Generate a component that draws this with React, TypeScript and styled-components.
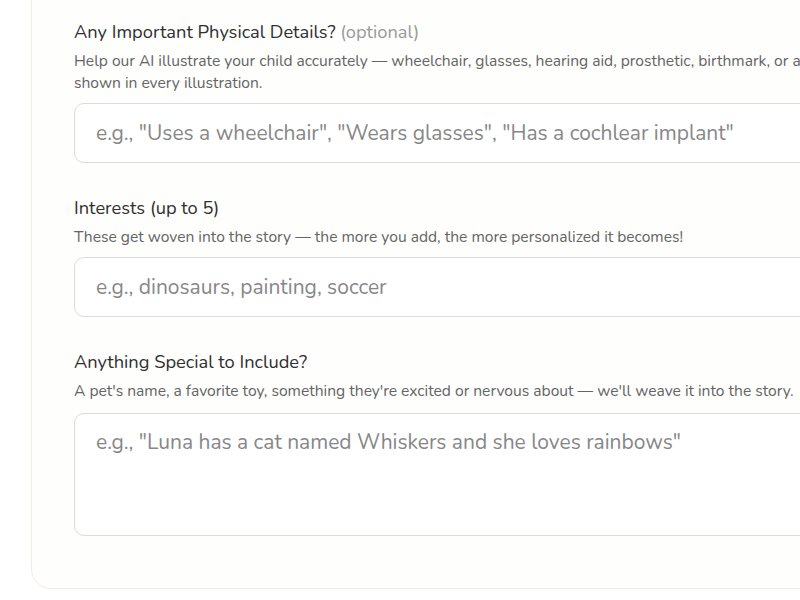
import React from "react";
import styled, { createGlobalStyle } from "styled-components";

const Global = createGlobalStyle`
  html, body {
    margin: 0;
    padding: 0;
    background: #ffffff;
    overflow: hidden;
    font-family: "Nunito", Lato, "Open Sans", sans-serif;
  }
`;

const Card = styled.div`
  margin: -20px 0 0 31px;
  width: 1100px;
  box-sizing: border-box;
  padding: 39px 42px 52px;
  background: #fefefd;
  border: 1.5px solid #f4ebe2;
  border-radius: 20px;
  display: flex;
  flex-direction: column;
  gap: 33px;
`;

const Field = styled.div`
  display: flex;
  flex-direction: column;
`;

const Label = styled.div`
  font-size: 18.3px;
  line-height: 24px;
  color: #2f2f2f;
`;

const Optional = styled.span`
  color: #9a9a9a;
`;

const Help = styled.div`
  margin-top: 6px;
  font-size: 15.6px;
  line-height: 22px;
  color: #646464;
  width: 955px;
`;

const boxStyles = `
  margin-top: 9px;
  box-sizing: border-box;
  width: 100%;
  border: 1px solid #dcdcdc;
  border-radius: 10px;
  background: #ffffff;
  padding: 0 21px;
  font-family: inherit;
  font-size: 21px;
  color: #333;
  outline: none;
  &::placeholder {
    color: #878787;
  }
`;

const TextInput = styled.input`
  ${boxStyles}
  height: 60px;
`;

const TextArea = styled.textarea<{ $rows: number }>`
  ${boxStyles}
  height: ${(p) => p.$rows}px;
  padding-top: 16px;
  line-height: 24px;
  resize: none;
  margin-top: 11px;
`;

export default function App() {
  return (
    <>
      <Global />
      <Card>
        <Field>
          <Label>
            Any Important Physical Details? <Optional>(optional)</Optional>
          </Label>
          <Help>
            Help our AI illustrate your child accurately — wheelchair, glasses, hearing aid, prosthetic, birthmark, or anything else that should be shown in every illustration.
          </Help>
          <TextInput placeholder={'e.g., "Uses a wheelchair", "Wears glasses", "Has a cochlear implant"'} />
        </Field>
        <Field>
          <Label>Interests (up to 5)</Label>
          <Help>These get woven into the story — the more you add, the more personalized it becomes!</Help>
          <TextInput placeholder="e.g., dinosaurs, painting, soccer" />
        </Field>
        <Field>
          <Label>Anything Special to Include?</Label>
          <Help>A pet's name, a favorite toy, something they're excited or nervous about — we'll weave it into the story.</Help>
          <TextArea $rows={123} placeholder={'e.g., "Luna has a cat named Whiskers and she loves rainbows"'} />
        </Field>
      </Card>
    </>
  );
}
